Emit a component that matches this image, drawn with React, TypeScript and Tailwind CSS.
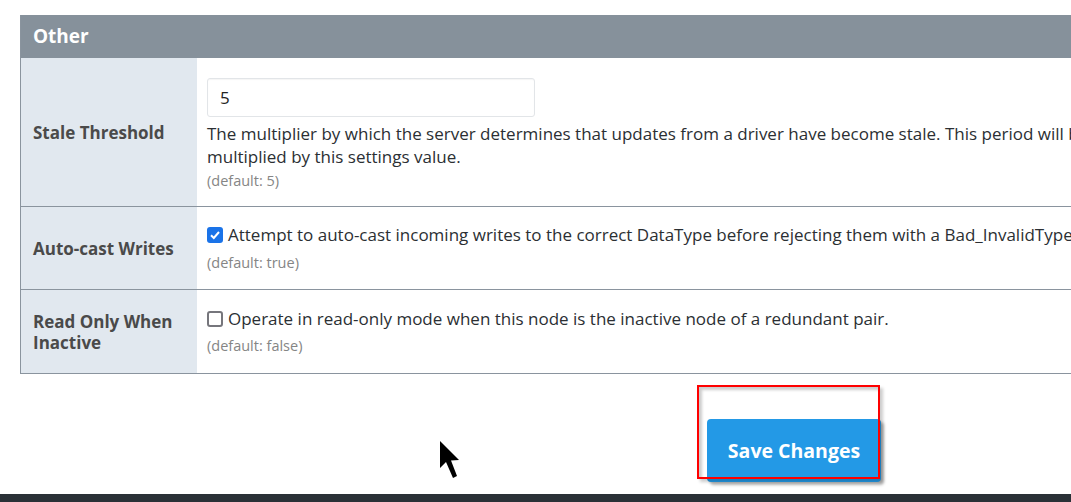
import React from 'react';

const font = { fontFamily: '"Open Sans", "Lato", sans-serif' };

function Row({ label, children, height, pad = '' }: { label: React.ReactNode; children: React.ReactNode; height: string; pad?: string }) {
  return (
    <div className={`flex border-b border-[#8a949e] ${height}`}>
      <div className="w-[176px] shrink-0 bg-[#e1e8ef] flex items-center pl-[12px] pr-2 text-[17px] font-bold leading-[21px] text-[#4a4a4a]">
        {label}
      </div>
      <div className={`flex-1 flex flex-col justify-center pl-[10px] ${pad}`}>{children}</div>
    </div>
  );
}

function CursorIcon() {
  return (
    <svg width="30" height="44" viewBox="0 0 30 44" className="absolute left-[440px] top-[441px]">
      <path d="M0 0 L0 27 L6 21 L13 37 L17 35 L11 19.5 L19 19 Z" fill="#000" />
    </svg>
  );
}

export default function App() {
  return (
    <div className="relative w-[1071px] h-[502px] overflow-hidden bg-white" style={font}>
      <div className="pt-[15px] pl-[20px]">
        <div className="w-[1200px] border-l border-[#8a949e]">
          <div className="h-[43px] bg-[#86919b] flex items-center pl-[12px] text-[19px] font-bold text-white">Other</div>
          <Row label="Stale Threshold" height="h-[149px]" pad="pt-[5px]">
            <input
              readOnly
              value="5"
              className="w-[328px] h-[39px] border border-[#e2e5e8] rounded-[3px] px-[12px] text-[17px] text-[#222] shadow-[inset_0_1px_1px_rgba(0,0,0,0.04)] outline-none"
              style={font}
            />
            <p className="mt-[5px] text-[17px] leading-[23px] text-[#2b2f33]">
              The multiplier by which the server determines that updates from a driver have become stale. This period will be
              <br />
              multiplied by this settings value.
            </p>
            <p className="mt-[2px] text-[14.5px] text-[#858585]">(default: 5)</p>
          </Row>
          <Row label="Auto-cast Writes" height="h-[83px]">
            <div className="flex items-center whitespace-nowrap text-[17px] text-[#2b2f33]">
              <span className="w-[16px] h-[16px] shrink-0 rounded-[3px] bg-[#1a73e8] flex items-center justify-center mr-[5px]">
                <svg width="12" height="12" viewBox="0 0 12 12">
                  <path d="M2 6.2 L4.8 9 L10 3" stroke="#fff" strokeWidth="2" fill="none" />
                </svg>
              </span>
              Attempt to auto-cast incoming writes to the correct DataType before rejecting them with a Bad_InvalidType error.
            </div>
            <p className="mt-[4px] text-[14.5px] text-[#858585]">(default: true)</p>
          </Row>
          <Row
            label={
              <span>
                Read Only When
                <br />
                Inactive
              </span>
            }
            height="h-[84px]"
          >
            <div className="flex items-center whitespace-nowrap text-[17px] text-[#2b2f33]">
              <span className="w-[16px] h-[16px] shrink-0 rounded-[3px] border-2 border-[#76767c] bg-white mr-[5px]" />
              Operate in read-only mode when this node is the inactive node of a redundant pair.
            </div>
            <p className="mt-[3px] text-[14.5px] text-[#858585]">(default: false)</p>
          </Row>
        </div>
      </div>

      <div className="flex h-[120px] pl-[707px] pt-[45px]">
        <button className="w-[174px] h-[63px] rounded-[4px] bg-[#2399e6] text-white text-[19.5px] font-bold shadow-[3px_3px_3px_rgba(0,0,0,0.3)]">
          Save Changes
        </button>
      </div>
      <div className="h-[8px] bg-[#2a3137]" />

      <div className="absolute left-[697px] top-[385px] w-[183px] h-[94px] border-2 border-[#ff0000] shadow-[inset_3px_3px_3px_rgba(0,0,0,0.2),3px_3px_3px_rgba(0,0,0,0.2)]" />
      <CursorIcon />
    </div>
  );
}
